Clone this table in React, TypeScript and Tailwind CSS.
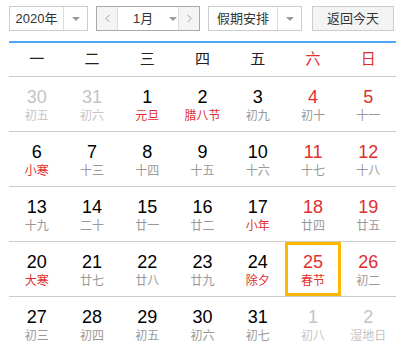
import { ChevronLeft, ChevronRight } from "lucide-react";

type Day = { d: number; l: string; fest?: boolean; other?: boolean };

const weeks: Day[][] = [
  [
    { d: 30, l: "初五", other: true },
    { d: 31, l: "初六", other: true },
    { d: 1, l: "元旦", fest: true },
    { d: 2, l: "腊八节", fest: true },
    { d: 3, l: "初九" },
    { d: 4, l: "初十" },
    { d: 5, l: "十一" },
  ],
  [
    { d: 6, l: "小寒", fest: true },
    { d: 7, l: "十三" },
    { d: 8, l: "十四" },
    { d: 9, l: "十五" },
    { d: 10, l: "十六" },
    { d: 11, l: "十七" },
    { d: 12, l: "十八" },
  ],
  [
    { d: 13, l: "十九" },
    { d: 14, l: "二十" },
    { d: 15, l: "廿一" },
    { d: 16, l: "廿二" },
    { d: 17, l: "小年", fest: true },
    { d: 18, l: "廿四" },
    { d: 19, l: "廿五" },
  ],
  [
    { d: 20, l: "大寒", fest: true },
    { d: 21, l: "廿七" },
    { d: 22, l: "廿八" },
    { d: 23, l: "廿九" },
    { d: 24, l: "除夕", fest: true },
    { d: 25, l: "春节", fest: true },
    { d: 26, l: "初二" },
  ],
  [
    { d: 27, l: "初三" },
    { d: 28, l: "初四" },
    { d: 29, l: "初五" },
    { d: 30, l: "初六" },
    { d: 31, l: "初七" },
    { d: 1, l: "初八", other: true },
    { d: 2, l: "湿地日", other: true },
  ],
];

const weekdays = ["一", "二", "三", "四", "五", "六", "日"];

function Caret() {
  return (
    <span className="block w-0 h-0 border-l-[4px] border-r-[4px] border-t-[4px] border-l-transparent border-r-transparent border-t-[#999]" />
  );
}

export default function App() {
  return (
    <div className="w-[405px] h-[356px] bg-white font-['Liberation_Sans','Noto_Sans_CJK_SC',sans-serif] text-[#333]">
      <div className="mx-[9px] pt-[6px]">
        {/* top bar */}
        <div className="flex items-center h-[25px] text-[13px]">
          <div className="flex w-[79px] h-[25px] border border-[#ccc]">
            <div className="flex-1 flex items-center justify-center border-r border-[#ddd]">2020年</div>
            <div className="w-[23px] flex items-center justify-center">
              <Caret />
            </div>
          </div>

          <div className="flex w-[104px] h-[25px] ml-[8px] border border-[#aaa]">
            <div className="w-[21px] flex items-center justify-center bg-[#f4f4f4] border-r border-[#ddd] text-[#888]">
              <ChevronLeft size={13} strokeWidth={1.5} />
            </div>
            <div className="flex-1 flex items-center pl-[15px]">
              <span>1月</span>
              <span className="ml-[16px]">
                <Caret />
              </span>
            </div>
            <div className="w-[21px] flex items-center justify-center bg-[#f4f4f4] border-l border-[#ddd] text-[#888]">
              <ChevronRight size={13} strokeWidth={1.5} />
            </div>
          </div>

          <div className="flex w-[94px] h-[25px] ml-[8px] border border-[#ccc]">
            <div className="flex-1 flex items-center justify-center border-r border-[#ddd]">假期安排</div>
            <div className="w-[23px] flex items-center justify-center">
              <Caret />
            </div>
          </div>

          <button className="w-[82px] h-[25px] ml-[10px] border border-[#ccc] bg-[#f4f4f4] flex items-center justify-center">
            返回今天
          </button>
        </div>

        <div className="mt-[10px] h-[2px] bg-[#4ea6f5]" />

        {/* weekday header */}
        <div className="grid grid-cols-7 h-[34px] border-b border-[#ccc] text-[15px]">
          {weekdays.map((w, i) => (
            <div
              key={w}
              className={`flex items-center justify-center ${i >= 5 ? "text-[#e02f2f]" : "text-[#222]"}`}
            >
              {w}
            </div>
          ))}
        </div>

        {/* days */}
        {weeks.map((row, ri) => (
          <div key={ri} className={`grid grid-cols-7 h-[55px] ${ri < 4 ? "border-b border-[#ccc]" : ""}`}>
            {row.map((c, ci) => {
              const weekend = ci >= 5;
              const today = ri === 3 && ci === 5;
              const numColor = c.other ? "text-[#c4c4c4]" : weekend ? "text-[#e02f2f]" : "text-black";
              const lunColor = c.other ? "text-[#c4c4c4]" : c.fest ? "text-[#e02f2f]" : "text-[#999]";
              return (
                <div
                  key={ci}
                  className={`flex flex-col items-center pt-[10px] ${today ? "shadow-[inset_0_0_0_3px_#ffb800]" : ""}`}
                >
                  <span className={`text-[18px] leading-[20px] ${numColor}`}>{c.d}</span>
                  <span className={`text-[12px] leading-[16px] mt-[1px] ${lunColor}`}>{c.l}</span>
                </div>
              );
            })}
          </div>
        ))}
      </div>
    </div>
  );
}
